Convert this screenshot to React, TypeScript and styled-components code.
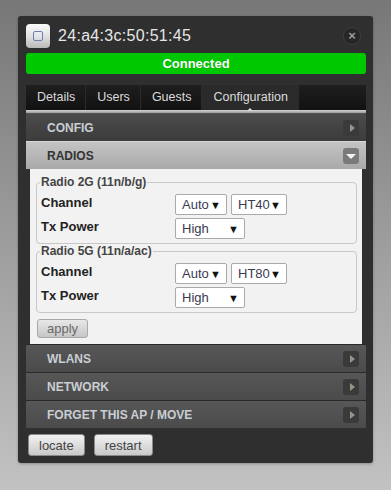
import styled, { createGlobalStyle } from 'styled-components';

const GlobalStyle = createGlobalStyle`
  html, body {
    margin: 0;
    padding: 0;
    height: 100%;
  }
  body {
    min-height: 490px;
    background: linear-gradient(to bottom, #777777 0%, #9a9a9a 45%, #c2c2c2 100%);
    font-family: 'Liberation Sans', Arial, sans-serif;
  }
  * {
    box-sizing: border-box;
  }
`;

const radios = [
  { name: 'Radio 2G (11n/b/g)', ht: 'HT40' },
  { name: 'Radio 5G (11n/a/ac)', ht: 'HT80' },
];

const sectionsBelow = ['WLANS', 'NETWORK', 'FORGET THIS AP / MOVE'];

const tabs = ['Details', 'Users', 'Guests', 'Configuration'];

export default function App() {
  return (
    <>
      <GlobalStyle />
      <Panel>
        <Header>
          <DeviceIcon>
            <span />
          </DeviceIcon>
          <Title>24:a4:3c:50:51:45</Title>
          <CloseButton>×</CloseButton>
        </Header>
        <StatusBar>Connected</StatusBar>

        <TabBar>
          {tabs.map(tab => (
            <Tab key={tab} $active={tab === 'Configuration'}>
              {tab}
            </Tab>
          ))}
        </TabBar>
        <TabRule />

        <Accordion>
          <SectionHeader>
            CONFIG
            <ToggleBtn>
              <ArrowRight />
            </ToggleBtn>
          </SectionHeader>
          <SectionHeader $open>
            RADIOS
            <ToggleBtn $open>
              <ArrowDown />
            </ToggleBtn>
          </SectionHeader>
          <SectionBody>
            {radios.map(radio => (
              <RadioSet key={radio.name}>
                <Legend>{radio.name}</Legend>
                <Row>
                  <Label>Channel</Label>
                  <Controls>
                    <FakeSelect $width={52}>
                      Auto <Caret>▼</Caret>
                    </FakeSelect>
                    <FakeSelect $width={56}>
                      {radio.ht} <Caret>▼</Caret>
                    </FakeSelect>
                  </Controls>
                </Row>
                <Row>
                  <Label>Tx Power</Label>
                  <Controls>
                    <FakeSelect $width={70}>
                      High <Caret>▼</Caret>
                    </FakeSelect>
                  </Controls>
                </Row>
              </RadioSet>
            ))}
            <ApplyButton>apply</ApplyButton>
          </SectionBody>
          {sectionsBelow.map(s => (
            <SectionHeader key={s} $light>
              {s}
              <ToggleBtn>
                <ArrowRight />
              </ToggleBtn>
            </SectionHeader>
          ))}
        </Accordion>

        <Footer>
          <FooterButton>locate</FooterButton>
          <FooterButton>restart</FooterButton>
        </Footer>
      </Panel>
    </>
  );
}

const Panel = styled.div`
  margin: 16px 0 0 18px;
  width: 355px;
  height: 447px;
  padding: 8px 7px 0 8px;
  background: #2f2f2f;
  border-radius: 3px;
  box-shadow: 0 1px 3px rgba(0, 0, 0, 0.25);
  display: flex;
  flex-direction: column;
`;

const Header = styled.div`
  display: flex;
  align-items: center;
  height: 24px;
  padding-right: 6px;
`;

const DeviceIcon = styled.div`
  width: 24px;
  height: 24px;
  border-radius: 4px;
  background: linear-gradient(to bottom, #fafafa 0%, #e2e2e2 50%, #b9b9b9 100%);
  display: flex;
  align-items: center;
  justify-content: center;

  span {
    width: 10px;
    height: 10px;
    border: 1px solid #6f7fa8;
    border-radius: 2px;
    background: linear-gradient(to bottom, #eef0f5, #d6d9e2);
  }
`;

const Title = styled.div`
  margin-left: 8px;
  flex: 1;
  color: #e6e6e6;
  font-size: 16px;
  letter-spacing: 0.3px;
  line-height: 24px;
`;

const CloseButton = styled.div`
  width: 16px;
  height: 16px;
  border-radius: 50%;
  background: #262626;
  box-shadow: 0 0 0 1px #3c3c3c;
  color: #9a9a9a;
  font-size: 13px;
  font-weight: bold;
  line-height: 15px;
  text-align: center;
`;

const StatusBar = styled.div`
  margin-top: 5px;
  height: 21px;
  border-radius: 3px;
  background: #00c800;
  color: #fff;
  font-size: 13px;
  font-weight: bold;
  line-height: 21px;
  text-align: center;
  text-shadow: 0 0 1px rgba(0, 0, 0, 0.3);
`;

const TabBar = styled.div`
  margin-top: 11px;
  height: 25px;
  display: flex;
  background: linear-gradient(to bottom, #1e1e1e, #121212);
`;

const Tab = styled.div<{ $active?: boolean }>`
  padding: 0 10px 0 11px;
  line-height: 25px;
  font-size: 12.5px;
  color: #dcdcdc;
  border-right: 1px solid #2b2b2b;
  background: ${p => (p.$active ? '#2a2a2a' : 'transparent')};
  position: relative;

  ${p =>
    p.$active &&
    `
    &::after {
      content: '';
      position: absolute;
      left: 50%;
      bottom: -1px;
      margin-left: -3px;
      border: 3px solid transparent;
      border-bottom-color: #dcdcdc;
    }
  `}
`;

const TabRule = styled.div`
  height: 3px;
  background: linear-gradient(to bottom, #d4d4d4, #9a9a9a);
`;

const Accordion = styled.div`
  display: flex;
  flex-direction: column;
`;

const SectionHeader = styled.div<{ $open?: boolean; $light?: boolean }>`
  height: 28px;
  padding: 0 7px 0 21px;
  display: flex;
  align-items: center;
  justify-content: space-between;
  font-size: 12px;
  font-weight: bold;
  color: ${p => (p.$open ? '#333' : '#c9ced4')};
  background: ${p =>
    p.$open
      ? 'linear-gradient(to bottom, #c4c4c4, #a9a9a9)'
      : p.$light
        ? 'linear-gradient(to bottom, #575757, #4b4b4b)'
        : 'linear-gradient(to bottom, #4b4b4b, #3c3c3c)'};
  border-top: 1px solid ${p => (p.$open ? '#d6d6d6' : p.$light ? '#2a2a2a' : '#555')};
`;

const ToggleBtn = styled.div<{ $open?: boolean }>`
  width: 16px;
  height: 16px;
  border-radius: 3px;
  background: ${p => (p.$open ? '#7a7a7a' : '#3a3a3a')};
  display: flex;
  align-items: center;
  justify-content: center;
`;

const ArrowRight = styled.span`
  width: 0;
  height: 0;
  margin-left: 2px;
  border-top: 4px solid transparent;
  border-bottom: 4px solid transparent;
  border-left: 5px solid #8e9a86;
`;

const ArrowDown = styled.span`
  width: 0;
  height: 0;
  margin-top: 2px;
  border-left: 5px solid transparent;
  border-right: 5px solid transparent;
  border-top: 5px solid #f4f4f4;
`;

const SectionBody = styled.div`
  margin: 0 4px;
  padding: 6px 5px 6px 6px;
  background: #f2f2f2;
`;

const RadioSet = styled.fieldset`
  margin: 0;
  padding: 5px 4px 4px 4px;
  border: 1px solid #c8c8c8;
  border-radius: 4px;
`;

const Legend = styled.legend`
  padding: 0 1px;
  margin-left: -1px;
  font-size: 12px;
  font-weight: bold;
  line-height: 14px;
  color: #444;
`;

const Row = styled.div`
  display: grid;
  grid-template-columns: 134px 1fr;
  align-items: start;
  & + & {
    margin-top: 3px;
  }
`;

const Label = styled.div`
  padding-top: 1px;
  font-size: 13px;
  font-weight: bold;
  color: #222;
`;

const Controls = styled.div`
  display: flex;
  gap: 4px;
`;

const FakeSelect = styled.div<{ $width: number }>`
  width: ${p => p.$width}px;
  height: 21px;
  padding: 0 5px 0 6px;
  display: flex;
  align-items: center;
  justify-content: space-between;
  background: #fff;
  border: 1px solid #aaa;
  border-radius: 2px;
  font-size: 13px;
  color: #3a3a50;
`;

const Caret = styled.span`
  font-size: 11px;
  color: #111;
`;

const ApplyButton = styled.button`
  display: block;
  margin-top: 6px;
  margin-left: 1px;
  width: 51px;
  height: 19px;
  padding: 0;
  border: 1px solid #a8a8a8;
  border-radius: 3px;
  background: linear-gradient(to bottom, #e8e8e8, #c6c6c6);
  font-family: 'Liberation Sans', Arial, sans-serif;
  font-size: 13px;
  color: #6a6a6a;
`;

const Footer = styled.div`
  margin-top: 6px;
  padding-left: 2px;
  display: flex;
  gap: 9px;
`;

const FooterButton = styled.button`
  height: 22px;
  padding: 0 10px;
  border: 1px solid #8a8a8a;
  border-radius: 3px;
  background: linear-gradient(to bottom, #f2f2f2, #c9c9c9);
  font-family: 'Liberation Sans', Arial, sans-serif;
  font-size: 13px;
  color: #444;
`;
